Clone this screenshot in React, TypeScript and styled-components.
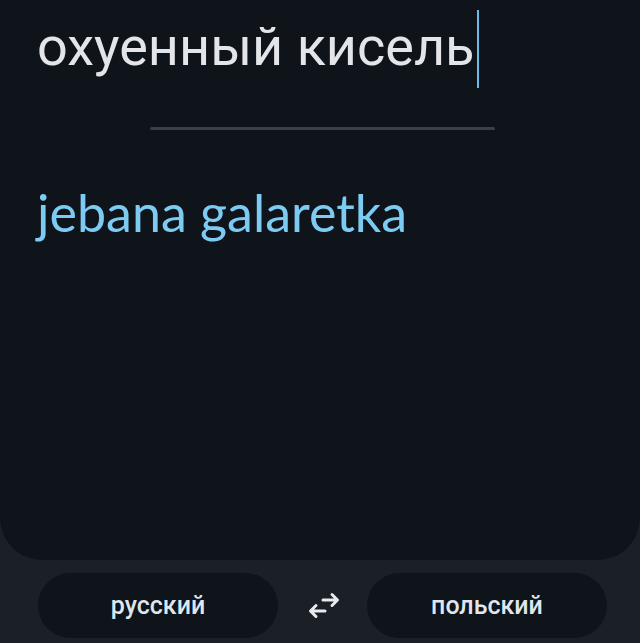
import { createGlobalStyle } from "styled-components";
import styled from "styled-components";

const Global = createGlobalStyle`
  html, body {
    margin: 0;
    padding: 0;
    background: #1b1f26;
    overflow: hidden;
  }
  * { box-sizing: border-box; }
`;

export default function App() {
  return (
    <>
      <Global />
      <Page>
        <Card>
          <Source>
            охуенный кисель<Caret />
          </Source>
          <Divider />
          <Result>jebana galaretka</Result>
        </Card>
        <LangBar>
          <LangButton>русский</LangButton>
          <SwapButton aria-label="swap">
            <svg width="40" height="30" viewBox="0 0 40 30" fill="none">
              <path
                d="M20 9 L34 9 M29 3.5 L34.5 9 L29 14.5"
                stroke="#e8ecf0"
                strokeWidth="3"
                strokeLinecap="round"
                strokeLinejoin="round"
              />
              <path
                d="M22 20 L8 20 M13 14.5 L7.5 20 L13 25.5"
                stroke="#e8ecf0"
                strokeWidth="3"
                strokeLinecap="round"
                strokeLinejoin="round"
              />
            </svg>
          </SwapButton>
          <LangButton>польский</LangButton>
        </LangBar>
      </Page>
    </>
  );
}

const Page = styled.div`
  width: 640px;
  height: 643px;
  display: flex;
  flex-direction: column;
  background: #1b1f26;
`;

const Card = styled.div`
  height: 560px;
  background: #0f131a;
  border-radius: 0 0 42px 42px;
  padding: 14px 0 0 37px;
  display: flex;
  flex-direction: column;
`;

const Source = styled.div`
  font-family: Roboto, "Noto Sans", sans-serif;
  font-size: 54px;
  line-height: 66px;
  height: 66px;
  color: #e4e5e8;
  display: flex;
  align-items: flex-start;
`;

const Caret = styled.span`
  display: inline-block;
  width: 2px;
  height: 78px;
  background: #6bbde8;
  margin: -4px 0 -8px 3px;
`;

const Divider = styled.div`
  align-self: flex-start;
  margin: 47px 0 0 113px;
  width: 345px;
  height: 3px;
  border-radius: 2px;
  background: #36414b;
`;

const Result = styled.div`
  margin-top: 51px;
  font-family: Lato, "Open Sans", sans-serif;
  font-size: 52px;
  line-height: 62px;
  color: #7ccbf3;
`;

const LangBar = styled.div`
  display: flex;
  align-items: center;
  padding: 13px 33px 0 38px;
`;

const LangButton = styled.button`
  width: 240px;
  height: 65px;
  border: none;
  border-radius: 33px;
  background: #0f131a;
  color: #dfe6ee;
  font-family: Roboto, "Noto Sans", sans-serif;
  font-size: 25px;
  font-weight: 500;
`;

const SwapButton = styled.button`
  width: 89px;
  height: 65px;
  border: none;
  background: transparent;
  display: flex;
  align-items: center;
  justify-content: center;
  padding: 0;
`;
